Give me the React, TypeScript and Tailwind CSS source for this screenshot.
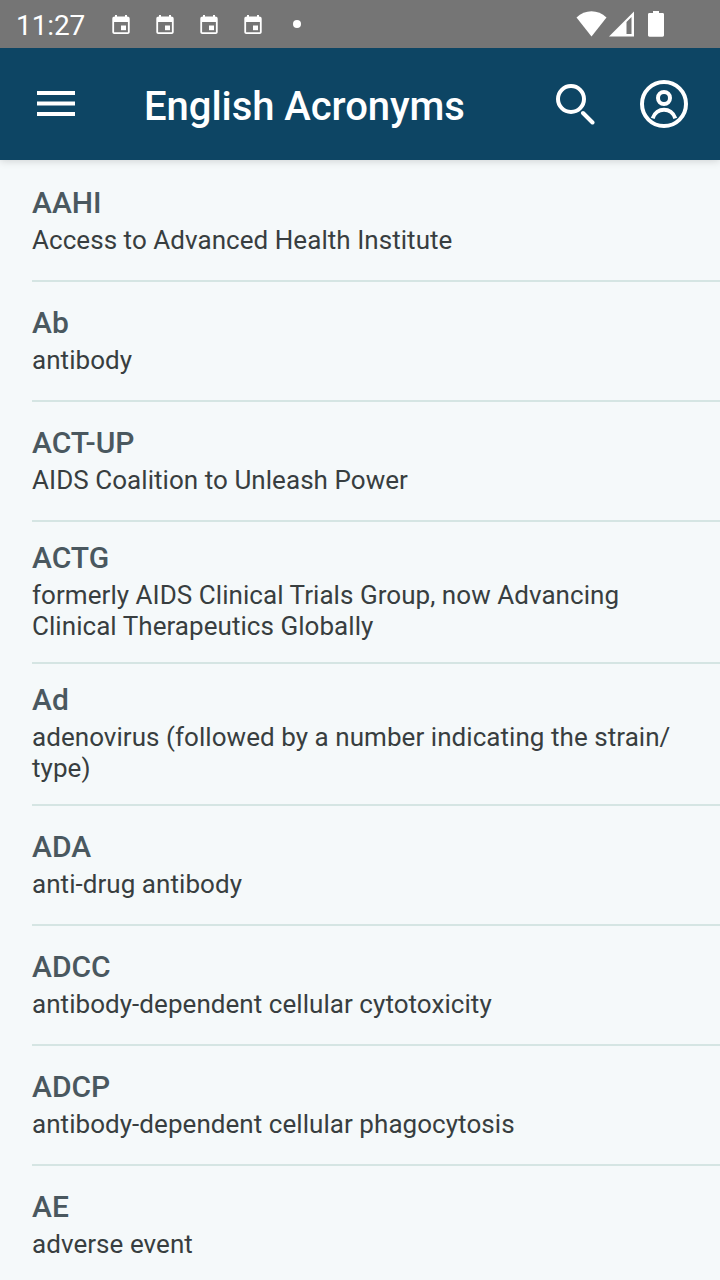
import React from "react";

const rows = [
  { term: "AAHI", text: ["Access to Advanced Health Institute"] },
  { term: "Ab", text: ["antibody"] },
  { term: "ACT-UP", text: ["AIDS Coalition to Unleash Power"] },
  { term: "ACTG", text: ["formerly AIDS Clinical Trials Group, now Advancing", "Clinical Therapeutics Globally"] },
  { term: "Ad", text: ["adenovirus (followed by a number indicating the strain/", "type)"] },
  { term: "ADA", text: ["anti-drug antibody"] },
  { term: "ADCC", text: ["antibody-dependent cellular cytotoxicity"] },
  { term: "ADCP", text: ["antibody-dependent cellular phagocytosis"] },
  { term: "AE", text: ["adverse event"] },
];

function CalendarIcon() {
  return (
    <svg width="24" height="24" viewBox="0 0 24 24" className="block">
      <path
        fill="#fff"
        fillRule="evenodd"
        d="M6 3h2v1.500h8V3h2v1.500c1.800 0 2.700.8 2.700 2.300V20c0 1.300-.8 2-2 2H5.300c-1.200 0-2-.7-2-2V6.800C3.300 5.300 4.200 4.500 6 4.500V3Zm-.9 7v10.300h13.800V10H5.100Z"
      />
      <path fill="#fff" d="M12 13.500h5v4.700h-5z" />
    </svg>
  );
}

export default function App() {
  return (
    <div className="flex h-[1280px] w-[720px] flex-col overflow-hidden bg-[#f5f9fa] font-['Roboto',sans-serif]">
      <header className="z-10 shrink-0 shadow-[0_1px_8px_rgba(0,0,0,0.16)]">
        <div className="flex h-12 items-center bg-[#757575] pl-4 text-white">
          <span className="w-[93px] pt-[3px] text-[28px] leading-[45px] tracking-[-0.1px]">11:27</span>
          <div className="flex gap-5">
            <CalendarIcon />
            <CalendarIcon />
            <CalendarIcon />
            <CalendarIcon />
          </div>
          <span className="ml-7 size-2 rounded-full bg-white" />
          <svg width="92" height="28" viewBox="0 0 92 28" fill="#fff" className="ml-[275px]">
            <path d="M.5 7.500C9-.7 22-.7 30.500 7.500L15.500 26.500Z" />
            <path fillRule="evenodd" d="M58 1.500v25H33Zm-7.500 10.500v12h5V7Z" />
            <path d="M77 1h6v2h3.500c1 0 1.500.5 1.500 1.500v20.500c0 1-.5 1.700-1.500 1.700h-13c-1 0-1.500-.7-1.500-1.700V4.500c0-1 .5-1.500 1.500-1.500H77Z" />
          </svg>
        </div>
        <div className="flex h-28 items-center bg-[#0d4564] pl-9 text-white">
          <svg width="40" height="28" viewBox="0 0 40 28" stroke="#fff" strokeWidth="4">
            <path d="M1 3h38M1 13.500h38M1 24h38" />
          </svg>
          <h1 className="ml-[68px] w-[411px] pt-[5px] text-[40px] leading-[48px] font-medium tracking-[-0.05px]">English Acronyms</h1>
          <svg width="42" height="42" viewBox="0 0 42 42" fill="none" stroke="#fff" strokeWidth="4">
            <circle cx="16" cy="16" r="13" />
            <path d="m28 30 9.500 9.500" strokeLinecap="round" />
          </svg>
          <svg width="48" height="48" viewBox="0 0 48 48" fill="none" stroke="#fff" strokeWidth="4" className="ml-[43px]">
            <circle cx="24" cy="24" r="22" />
            <circle cx="24" cy="18" r="6" />
            <path d="M12.700 38.300C16.500 27 31.500 27 35.300 38.300" />
          </svg>
        </div>
      </header>
      <main className="pt-0.5 pl-8">
        {rows.map((row) => (
          <section
            key={row.term}
            className={
              row.text.length > 1
                ? "h-[142px] border-b-2 border-[#d5e5e3] pt-[17px]"
                : "h-[120px] border-b-2 border-[#d5e5e3] pt-[22px]"
            }
          >
            <h2 className="mb-[3px] text-[30px] leading-[38px] font-medium text-[#4a585f]">{row.term}</h2>
            {row.text.map((line) => (
              <p key={line} className="text-[26px] leading-[31px] tracking-[0.05px] whitespace-nowrap text-[#383e40]">
                {line}
              </p>
            ))}
          </section>
        ))}
      </main>
    </div>
  );
}
